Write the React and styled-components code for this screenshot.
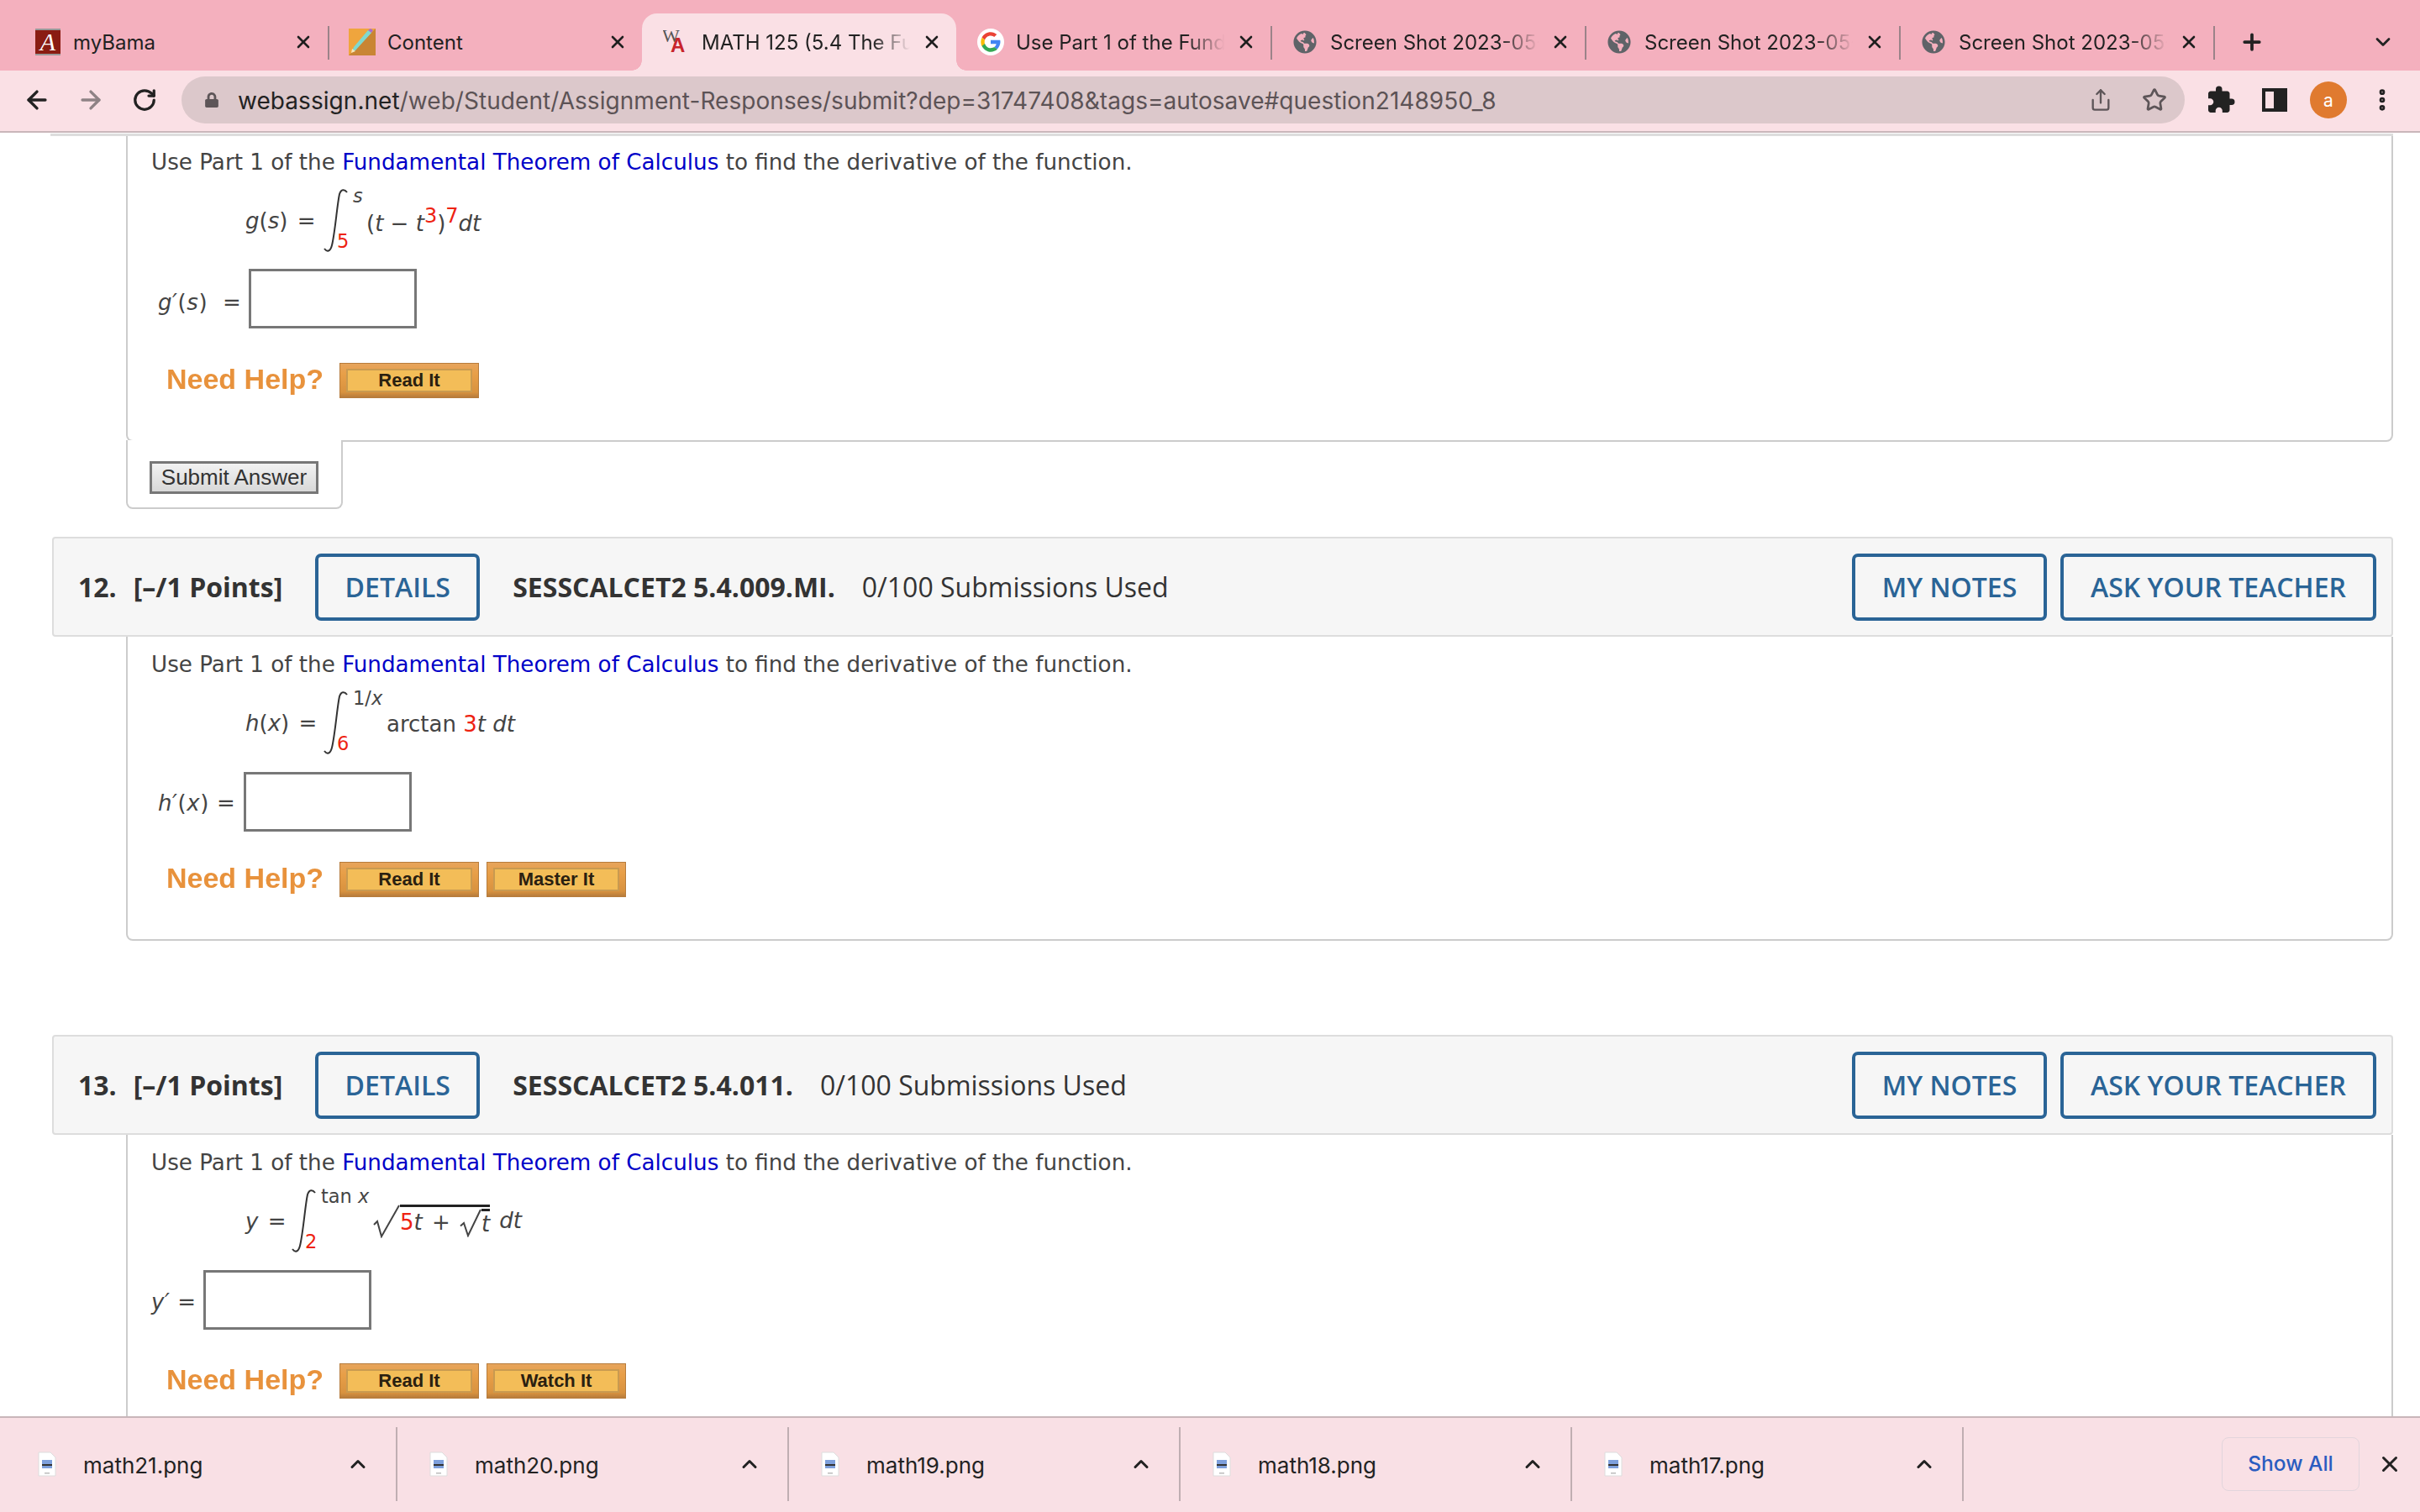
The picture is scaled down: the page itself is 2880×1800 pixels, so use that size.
import styled, { createGlobalStyle, css } from "styled-components"
import { ArrowLeft, ArrowRight, RotateCw, Share, Star, EllipsisVertical, ChevronDown, ChevronUp, Plus, X } from "lucide-react"
import { FaGlobeAmericas, FaLock } from "react-icons/fa"
import { MdExtension } from "react-icons/md"

const GlobalStyle = createGlobalStyle`
  html, body { margin: 0; padding: 0; background: #fff; overflow: hidden; }
  * { box-sizing: border-box; }
`

const Screen = styled.div`
  width: 2880px;
  height: 1800px;
  display: flex;
  flex-direction: column;
  overflow: hidden;
  font-family: "Inter", "Liberation Sans", sans-serif;
`

/* browser chrome */
const TabStrip = styled.div`
  height: 84px;
  flex: none;
  padding: 16px 0 0 16px;
  display: flex;
  background: #f4b0be;
`
const flare = css`
  content: "";
  position: absolute;
  bottom: 0;
  width: 12px;
  height: 12px;
`
const Tab = styled.div`
  position: relative;
  width: 374px;
  height: 68px;
  flex: none;
  display: flex;
  align-items: center;
  padding-left: 25px;
  color: #222;
  font-size: 24px;
  background: ${({ $active }) => ($active ? "#fae0e5" : "transparent")};
  border-radius: ${({ $active }) => ($active ? "18px 18px 0 0" : "0")};
  ${({ $active }) => $active && css`
    &::before {
      ${flare}
      left: -12px;
      background: radial-gradient(circle at 0 0, transparent 11.5px, #fae0e5 12px);
    }
    &::after {
      ${flare}
      right: -12px;
      background: radial-gradient(circle at 100% 0, transparent 11.5px, #fae0e5 12px);
    }
  `}
  ${({ $sep }) => $sep && css`
    &::after {
      content: "";
      position: absolute;
      right: -2px;
      top: 15px;
      width: 2px;
      height: 40px;
      background: #9b8389;
    }
  `}
`
const TabIcon = styled.span`
  width: 32px;
  height: 32px;
  flex: none;
  display: flex;
  align-items: center;
  justify-content: center;
  margin-right: 14px;
`
const TabTitle = styled.span`
  width: 248px;
  flex: none;
  white-space: nowrap;
  overflow: hidden;
  -webkit-mask-image: ${({ $fade }) => ($fade ? "linear-gradient(90deg, #000 82%, transparent 100%)" : "none")};
`
const TabClose = styled.span`
  width: 28px;
  margin-left: 12px;
  display: flex;
  justify-content: center;
  color: #1f1f1f;
`
const StripButton = styled.div`
  width: ${({ $w }) => $w}px;
  height: 68px;
  flex: none;
  display: flex;
  align-items: center;
  justify-content: center;
  color: #222;
`
const Toolbar = styled.div`
  height: 74px;
  flex: none;
  display: flex;
  align-items: center;
  padding: 0 13px 2px 12px;
  background: #fae0e5;
  border-bottom: 2px solid #c9b6ba;
`
const ToolButton = styled.div`
  width: 64px;
  height: 56px;
  flex: none;
  display: flex;
  align-items: center;
  justify-content: center;
  color: ${({ $dim }) => ($dim ? "#8e8285" : "#222")};
`
const Omnibox = styled.div`
  width: 2384px;
  height: 56px;
  flex: none;
  margin: 0 11px 0 12px;
  display: flex;
  align-items: center;
  padding: 0 4px 0 27px;
  border-radius: 28px;
  background: #dcc8cb;
  color: #5c5356;
  font-size: 28px;
  letter-spacing: 0.05px;
`
const Url = styled.span`
  flex: 1;
  margin-left: 22px;
  padding-top: 2px;
  white-space: nowrap;
  b { font-weight: 400; color: #222; }
`
const OmniAction = styled.span`
  width: 64px;
  display: flex;
  justify-content: center;
  color: #5d5558;
`
const Avatar = styled.span`
  width: 44px;
  height: 44px;
  border-radius: 50%;
  display: flex;
  align-items: center;
  justify-content: center;
  background: #e07a2f;
  color: #fff;
  font-size: 21px;
`

/* assignment page */
const Page = styled.main`
  flex: 1;
  min-height: 0;
  overflow: hidden;
  padding: 1px 32px 0 60px;
  color: #444;
  background: #fff;
`
const HeaderEnd = styled.div`
  height: 3px;
  background: #ddd;
`
const QuestionHeader = styled.header`
  height: 119px;
  margin: ${({ $top }) => $top}px 0 0 2px;
  display: flex;
  align-items: center;
  padding: 0 18px 0 29px;
  background: #f6f6f6;
  border: 2px solid #ddd;
  border-radius: 4px;
  font-family: "Open Sans", sans-serif;
  font-size: 32px;
  color: #333;
  white-space: nowrap;
`
const Number = styled.strong`
  font-weight: 700;
  font-size: 32px;
  margin-right: 20px;
`
const HeaderButton = styled.div`
  height: 80px;
  width: ${({ $w }) => $w}px;
  flex: none;
  display: flex;
  align-items: center;
  justify-content: center;
  border: 4px solid #2a6496;
  border-radius: 7px;
  color: #2a6496;
  font-weight: 600;
  font-size: 32px;
  margin: ${({ $m }) => $m || "0"};
`
const Code = styled.strong`
  font-weight: 700;
  margin-right: 32px;
  font-size: 32px;
`
const Spacer = styled.div`
  flex: 1;
`
const Body = styled.section`
  padding: ${({ $top }) => $top}px 0 ${({ $bottom }) => $bottom}px 28px;
  margin-left: 90px;
  border: solid #ccc;
  border-width: 0 2px 2px 2px;
  border-radius: 0 0 8px 8px;
`
const Prompt = styled.p`
  margin: 0;
  height: 36px;
  line-height: 36px;
  font-family: "DejaVu Sans", sans-serif;
  font-size: 26.2px;
  white-space: nowrap;
  a { color: #0000c8; text-decoration: none; }
`
const Formula = styled.div`
  height: 75px;
  margin: 14px 0 0 112px;
  display: flex;
  align-items: center;
  font-family: "DejaVu Sans", sans-serif;
  font-size: 26px;
  i { font-style: oblique; }
  em { font-style: normal; color: #ee2211; }
  sup { font-size: 24px; line-height: 0; color: #ee2211; }
`
const Lhs = styled.span`
  width: ${({ $w }) => $w}px;
  flex: none;
  white-space: nowrap;
  word-spacing: 3px;
`
const IntegralSvg = styled.svg`
  width: 30px;
  height: 75px;
  flex: none;
`
const Limits = styled.div`
  height: 80px;
  margin-top: -5px;
  flex: none;
  display: flex;
  flex-direction: column;
  justify-content: space-between;
  margin-left: 5px;
  font-size: 22.500px;
  line-height: 26px;
  width: ${({ $w }) => $w}px;
  white-space: nowrap;
`
const LowerLimit = styled.span`
  color: #ee2211;
  margin-left: ${({ $x }) => $x}px;
`
const Integrand = styled.span`
  display: block;
  white-space: nowrap;
  padding-top: ${({ $drop }) => $drop}px;
`
const Radical = styled.span`
  display: inline-flex;
  align-items: stretch;
  vertical-align: middle;
  margin-right: ${({ $after }) => $after}px;
`
const RadicalSign = styled.svg`
  width: ${({ $w }) => $w}px;
  height: ${({ $h }) => $h}px;
  flex: none;
`
const Radicand = styled.span`
  border-top: 3px solid #222;
  display: inline-block;
  white-space: pre;
  word-spacing: 3px;
  line-height: ${({ $h }) => $h - 3}px;
`
const AnswerRow = styled.div`
  display: flex;
  align-items: center;
  height: 71px;
  margin-top: ${({ $top }) => $top}px;
  padding-left: ${({ $indent }) => $indent}px;
  font-family: "DejaVu Sans", sans-serif;
  font-size: 26px;
  i { font-style: oblique; }
`
const AnswerLabel = styled.span`
  width: ${({ $w }) => $w}px;
  flex: none;
  white-space: pre;
  letter-spacing: 0.6px;
  padding-top: ${({ $drop }) => $drop}px;
`
const AnswerInput = styled.div`
  width: 200px;
  height: 71px;
  flex: none;
  border: 3px solid #777;
  background: #fff;
`
const HelpRow = styled.div`
  display: flex;
  align-items: center;
  height: 42px;
  margin: ${({ $top }) => $top}px 0 0 18px;
`
const NeedHelp = styled.span`
  width: 206px;
  flex: none;
  padding-bottom: 3px;
  font-family: "Liberation Sans", sans-serif;
  font-weight: 700;
  font-size: 34px;
  color: #e8923c;
  white-space: nowrap;
  filter: blur(0.5px);
`
const HelpButton = styled.div`
  width: 166px;
  height: 42px;
  flex: none;
  margin-right: 9px;
  padding: 6px 7px 6px 7px;
  border: 1px solid #b77c3c;
  background: linear-gradient(#e6a45c, #e89f48 30%, #d8923f 85%, #b77c3c);
`
const HelpLabel = styled.div`
  height: 100%;
  display: flex;
  align-items: center;
  justify-content: center;
  background: #f3bd58;
  border: 2px solid #c99a50;
  font-family: "Liberation Sans", sans-serif;
  font-weight: 700;
  font-size: 22px;
  color: #2a2010;
`
const SubmitTab = styled.div`
  position: relative;
  width: 258px;
  height: 82px;
  margin: -2px 0 0 90px;
  padding: 25px 0 0 26px;
  background: #fff;
  border: solid #ccc;
  border-width: 0 2px 2px 2px;
  border-radius: 0 0 8px 8px;
`
const SubmitButton = styled.div`
  width: 201px;
  height: 39px;
  display: flex;
  align-items: center;
  justify-content: center;
  border: 3px solid #777;
  background: linear-gradient(#f2f2f2, #d8d8d8);
  font-family: "Liberation Sans", sans-serif;
  font-size: 26px;
  color: #333;
`

/* downloads shelf */
const Shelf = styled.footer`
  height: 114px;
  flex: none;
  display: flex;
  align-items: center;
  padding: 0 0 2px 7px;
  background: #f9e0e5;
  border-top: 2px solid #c9b6ba;
  color: #222;
`
const ShelfItem = styled.div`
  width: 466px;
  height: 88px;
  flex: none;
  display: flex;
  align-items: center;
  padding-left: 38px;
  border-right: 2px solid #c0aeb2;
  font-size: 26px;
`
const ShelfName = styled.span`
  width: 313px;
  margin-left: 32px;
  padding-top: 2px;
`
const ShowAll = styled.div`
  width: 164px;
  height: 64px;
  margin-left: auto;
  padding-bottom: 2px;
  display: flex;
  align-items: center;
  justify-content: center;
  border: 1px solid #e2d5dc;
  border-radius: 8px;
  color: #2a5cc0;
  font-size: 24.500px;
  font-weight: 500;
`
const ShelfClose = styled.div`
  width: 72px;
  display: flex;
  justify-content: center;
`

const BamaIcon = () => (
  <svg width="30" height="32" viewBox="0 0 30 32">
    <rect width="30" height="32" fill="#8a1c12" />
    <rect width="30" height="2" fill="#999" />
    <rect y="30" width="30" height="2" fill="#999" />
    <text x="15" y="26" textAnchor="middle" fontFamily="Liberation Serif" fontStyle="italic" fontSize="30" fill="#fff">A</text>
  </svg>
)
const ContentIcon = () => (
  <svg width="32" height="32" viewBox="0 0 32 32">
    <rect width="32" height="32" fill="#efa53d" />
    <path d="M0 32 L32 0 V32 Z" fill="#c98534" />
    <path d="M4 27 L8 26 L27 5 L23 2 L6 22 Z" fill="#7fd9cf" />
    <path d="M23 2 L27 5 L29 2 L26 0 Z" fill="#a56ed0" />
    <path d="M3 29 L4 24 L8 27 Z" fill="#f7e6b8" />
  </svg>
)
const WebAssignIcon = () => (
  <svg width="32" height="36" viewBox="0 0 32 36">
    <text x="-1" y="18" fontFamily="Liberation Serif" fontSize="22" fill="#555">W</text>
    <text x="9" y="30" fontFamily="Liberation Sans" fontWeight="700" fontSize="24" fill="#c8242b">A</text>
  </svg>
)
const GoogleIcon = () => (
  <svg width="32" height="32" viewBox="0 0 48 48">
    <circle cx="24" cy="24" r="24" fill="#fff" />
    <path fill="#ea4335" d="M24 12.700c3 0 5.100 1.300 6.300 2.400l4.600-4.500C32 8 28.400 6.400 24 6.400c-6.900 0-12.800 3.900-15.700 9.700l5.300 4.100C15 16 19.100 12.700 24 12.700z" />
    <path fill="#4285f4" d="M41.200 24.400c0-1.400-.1-2.500-.4-3.600H24v6.500h9.900c-.2 1.600-1.300 4.100-3.700 5.700l5.100 4c3.800-3.500 5.900-8.600 5.900-12.600z" />
    <path fill="#fbbc05" d="M13.600 27.800c-.4-1.200-.6-2.500-.6-3.800s.2-2.600.6-3.800l-5.300-4.100C7.100 18.500 6.400 21.200 6.400 24s.7 5.500 1.900 7.900l5.300-4.100z" />
    <path fill="#34a853" d="M24 41.600c4.800 0 8.800-1.600 11.700-4.300l-5.500-4.300c-1.500 1-3.500 1.800-6.200 1.800-4.900 0-9-3.300-10.400-7.900l-5.300 4.100c2.900 5.800 8.800 10.600 15.700 10.600z" />
  </svg>
)
const SidePanelIcon = () => (
  <svg width="30" height="28" viewBox="0 0 30 28">
    <rect x="2" y="2" width="26" height="24" fill="none" stroke="#222" strokeWidth="4" />
    <rect x="14" y="2" width="14" height="24" fill="#222" />
  </svg>
)
const FileIcon = () => (
  <svg width="22" height="30" viewBox="0 0 22 30">
    <path d="M1 1 H15 L21 7 V29 H1 Z" fill="#fff" stroke="#ddd" />
    <rect x="5" y="10" width="12" height="10" fill="#7ea0dc" />
    <rect x="5" y="15" width="12" height="2" fill="#333" />
    <rect x="8" y="25" width="6" height="1.500" fill="#bbb" />
  </svg>
)

const Integral = () => (
  <IntegralSvg viewBox="0 0 30 75">
    <path d="M28 4 C25 0 21 0 19 6 C16 20 14 50 10 67 C8 75 4 75 1 71" fill="none" stroke="#333" strokeWidth="2" />
  </IntegralSvg>
)

const Root = ({ w, h, after, children }) => (
  <Radical $after={after}>
    <RadicalSign $w={w} $h={h} viewBox={`0 0 ${w} ${h}`}>
      <path d={`M1 ${h * 0.6} L5 ${h * 0.5} L10 ${h - 2} L${w - 1} 1`} fill="none" stroke="#444" strokeWidth="2" />
    </RadicalSign>
    <Radicand $h={h}>{children}</Radicand>
  </Radical>
)

const tabs = [
  { title: "myBama", icon: <BamaIcon />, sep: true },
  { title: "Content", icon: <ContentIcon /> },
  { title: "MATH 125 (5.4 The Fundamental", icon: <WebAssignIcon />, active: true, fade: true },
  { title: "Use Part 1 of the Fundamental", icon: <GoogleIcon />, sep: true, fade: true },
  { title: "Screen Shot 2023-05-01", icon: <FaGlobeAmericas size={28} color="#5f6368" />, sep: true, fade: true },
  { title: "Screen Shot 2023-05-01", icon: <FaGlobeAmericas size={28} color="#5f6368" />, sep: true, fade: true },
  { title: "Screen Shot 2023-05-01", icon: <FaGlobeAmericas size={28} color="#5f6368" />, sep: true, fade: true },
]

const files = ["math21.png", "math20.png", "math19.png", "math18.png", "math17.png"]

const PromptText = () => (
  <Prompt>
    Use Part 1 of the <a>Fundamental Theorem of Calculus</a> to find the derivative of the function.
  </Prompt>
)

const Help = ({ top, extra }) => (
  <HelpRow $top={top}>
    <NeedHelp>Need Help?</NeedHelp>
    <HelpButton><HelpLabel>Read It</HelpLabel></HelpButton>
    {extra && <HelpButton><HelpLabel>{extra}</HelpLabel></HelpButton>}
  </HelpRow>
)

const Header = ({ num, code, top }) => (
  <QuestionHeader $top={top}>
    <Number>{num}.</Number>
    <Number>[–/1 Points]</Number>
    <HeaderButton $w={196} $m="0 39px 0 19px">DETAILS</HeaderButton>
    <Code>{code}</Code>
    <span>0/100 Submissions Used</span>
    <Spacer />
    <HeaderButton $w={232} $m="0 16px 0 0">MY NOTES</HeaderButton>
    <HeaderButton $w={376}>ASK YOUR TEACHER</HeaderButton>
  </QuestionHeader>
)

export default function App() {
  return (
    <Screen>
      <GlobalStyle />
      <TabStrip>
        {tabs.map((t, i) => (
          <Tab key={i} $active={t.active} $sep={t.sep}>
            <TabIcon>{t.icon}</TabIcon>
            <TabTitle $fade={t.fade}>{t.title}</TabTitle>
            <TabClose><X size={24} strokeWidth={2.6} /></TabClose>
          </Tab>
        ))}
        <StripButton $w={92}><Plus size={30} strokeWidth={3} /></StripButton>
        <StripButton $w={220}><ChevronDown size={28} strokeWidth={2.4} /></StripButton>
      </TabStrip>

      <Toolbar>
        <ToolButton><ArrowLeft size={34} strokeWidth={2.4} /></ToolButton>
        <ToolButton $dim><ArrowRight size={34} strokeWidth={2.4} /></ToolButton>
        <ToolButton><RotateCw size={30} strokeWidth={2.6} /></ToolButton>
        <Omnibox>
          <FaLock size={18} color="#5d5558" />
          <Url><b>webassign.net</b>/web/Student/Assignment-Responses/submit?dep=31747408&amp;tags=autosave#question2148950_8</Url>
          <OmniAction><Share size={28} strokeWidth={2} /></OmniAction>
          <OmniAction><Star size={30} strokeWidth={2.2} /></OmniAction>
        </Omnibox>
        <ToolButton><MdExtension size={36} /></ToolButton>
        <ToolButton><SidePanelIcon /></ToolButton>
        <ToolButton><Avatar>a</Avatar></ToolButton>
        <ToolButton><EllipsisVertical size={32} strokeWidth={3} /></ToolButton>
      </Toolbar>

      <Page>
        <HeaderEnd />
        <Body $top={13} $bottom={50}>
          <PromptText />
          <Formula>
            <Lhs $w={93}><i>g</i>(<i>s</i>) =</Lhs>
            <Integral />
            <Limits $w={16}>
              <i>s</i>
              <LowerLimit $x={-19}>5</LowerLimit>
            </Limits>
            <Integrand $drop={6}>(<i>t</i> − <i>t</i><sup>3</sup>)<sup>7</sup><i>dt</i></Integrand>
          </Formula>
          <AnswerRow $top={20} $indent={8}>
            <AnswerLabel $w={108} $drop={8}><i>g′</i>(<i>s</i>)  =</AnswerLabel>
            <AnswerInput />
          </AnswerRow>
          <Help top={41} />
        </Body>
        <SubmitTab><SubmitButton>Submit Answer</SubmitButton></SubmitTab>

        <Header num={12} code="SESSCALCET2 5.4.009.MI." top={33} />
        <Body $top={15} $bottom={50}>
          <PromptText />
          <Formula>
            <Lhs $w={93}><i>h</i>(<i>x</i>) =</Lhs>
            <Integral />
            <Limits $w={40}>
              <span>1/<i>x</i></span>
              <LowerLimit $x={-19}>6</LowerLimit>
            </Limits>
            <Integrand $drop={3}>arctan <em>3</em><i>t</i> <i>dt</i></Integrand>
          </Formula>
          <AnswerRow $top={21} $indent={8}>
            <AnswerLabel $w={102} $drop={2}><i>h′</i>(<i>x</i>) =</AnswerLabel>
            <AnswerInput />
          </AnswerRow>
          <Help top={36} extra="Master It" />
        </Body>

        <Header num={13} code="SESSCALCET2 5.4.011." top={112} />
        <Body $top={15} $bottom={52}>
          <PromptText />
          <Formula>
            <Lhs $w={55}><i>y</i> =</Lhs>
            <Integral />
            <Limits $w={62}>
              <span>tan <i>x</i></span>
              <LowerLimit $x={-19}>2</LowerLimit>
            </Limits>
            <Integrand $drop={0}>
              <Root w={32} h={40} after={11}>
                <em>5</em><i>t</i> +{" "}
                <Root w={26} h={34} after={0}><i>t</i></Root>
              </Root>
              <i>dt</i>
            </Integrand>
          </Formula>
          <AnswerRow $top={21} $indent={0}>
            <AnswerLabel $w={62} $drop={4}><i>y′</i> =</AnswerLabel>
            <AnswerInput />
          </AnswerRow>
          <Help top={40} extra="Watch It" />
        </Body>
      </Page>

      <Shelf>
        {files.map(f => (
          <ShelfItem key={f}>
            <FileIcon />
            <ShelfName>{f}</ShelfName>
            <ChevronUp size={28} strokeWidth={2.6} />
          </ShelfItem>
        ))}
        <ShowAll>Show All</ShowAll>
        <ShelfClose><X size={30} strokeWidth={2.4} /></ShelfClose>
      </Shelf>
    </Screen>
  )
}
